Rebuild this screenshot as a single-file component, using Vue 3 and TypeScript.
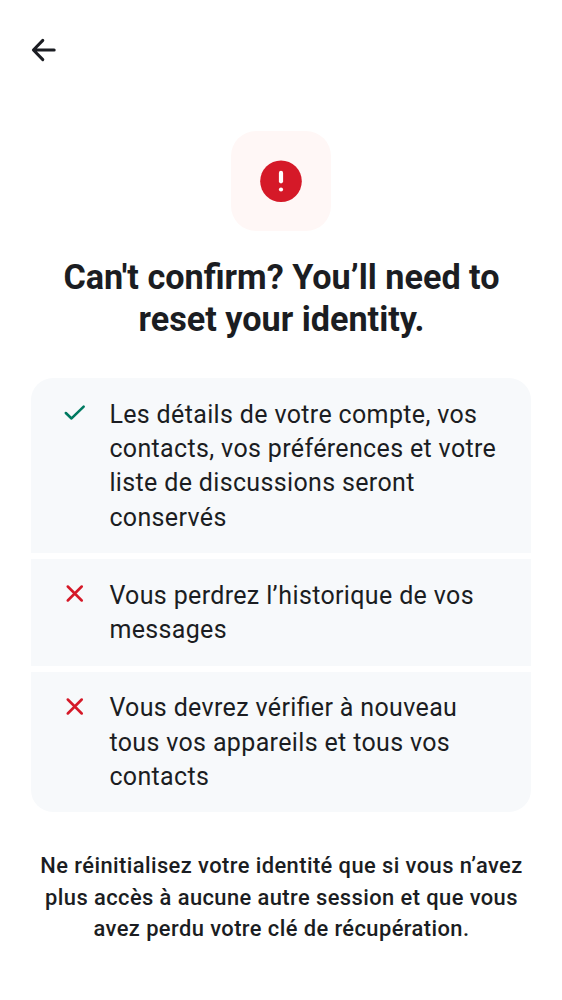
<script setup lang="ts">
interface Item {
  kind: 'check' | 'cross'
  lines: string[]
}
const items: Item[] = [
  { kind: 'check', lines: ['Les détails de votre compte, vos', 'contacts, vos préférences et votre', 'liste de discussions seront', 'conservés'] },
  { kind: 'cross', lines: ['Vous perdrez l’historique de vos', 'messages'] },
  { kind: 'cross', lines: ['Vous devrez vérifier à nouveau', 'tous vos appareils et tous vos', 'contacts'] },
]
const title: string[] = ["Can't confirm? You’ll need to", 'reset your identity.']
const footer: string[] = ['Ne réinitialisez votre identité que si vous n’avez', 'plus accès à aucune autre session et que vous', 'avez perdu votre clé de récupération.']
</script>

<template>
  <main class="screen">
    <header class="bar">
      <button class="back" aria-label="Retour">
        <svg width="25" height="24" viewBox="0 0 25 24"><path d="M23.2 12H2.8M11.8 2.4L2.4 12l9.4 9.6" fill="none" stroke="#1b1d22" stroke-width="3" stroke-linecap="round" stroke-linejoin="round" /></svg>
      </button>
    </header>
    <div class="badge">
      <svg width="42" height="42" viewBox="0 0 42 42">
        <circle cx="21" cy="21.2" r="20.8" fill="#d51928" />
        <path d="M21 12.9v8.4" stroke="#fff" stroke-width="4.2" stroke-linecap="round" />
        <circle cx="21" cy="29.5" r="2.1" fill="#fff" />
      </svg>
    </div>
    <h1><span v-for="l in title" :key="l">{{ l }}</span></h1>
    <ul class="list">
      <li v-for="(item, i) in items" :key="i">
        <svg class="mark" :class="item.kind" width="31" height="31" viewBox="0 0 24 24">
          <path v-if="item.kind === 'check'" d="M5.3 12.4L9.7 16.6L19.1 7.4" />
          <path v-else d="M6.8 6.6l10.8 10.8M17.6 6.6L6.8 17.4" />
        </svg>
        <p><span v-for="l in item.lines" :key="l">{{ l }}</span></p>
      </li>
    </ul>
    <p class="footer"><span v-for="l in footer" :key="l">{{ l }}</span></p>
  </main>
</template>

<style>
body { margin: 0; background: #fff; }
</style>
<style scoped>
.screen { box-sizing: border-box; width: 562px; height: 1000px; overflow: hidden; padding: 0 31px; background: #fff; color: #1b1d22; font-family: Roboto, sans-serif; display: flex; flex-direction: column; }
.bar { height: 100px; display: flex; align-items: center; flex: none; }
.back { border: 0; padding: 0; background: none; display: flex; }
.badge { flex: none; align-self: center; width: 100px; height: 100px; margin-top: 31px; border-radius: 25px; background: #fff7f6; display: flex; align-items: center; justify-content: center; }
span { display: block; white-space: nowrap; }
h1 { margin: 25px 0 0; padding-left: 1px; font-size: 34.2px; line-height: 42px; font-weight: 700; text-align: center; }
.list { list-style: none; margin: 38px 0 0; padding: 0; display: flex; flex-direction: column; gap: 6.25px; border-radius: 22px; overflow: hidden; }
li { display: flex; align-items: flex-start; gap: 19.4px; padding: 18.75px 28px; background: #f7f9fb; }
li p { margin: .9px 0 -.9px; font-size: 25px; line-height: 34.375px; letter-spacing: .35px; font-feature-settings: "liga" 1; }
.mark { flex: none; fill: none; stroke-width: 2; stroke-linecap: round; stroke-linejoin: round; }
.check { stroke: #007a61; }
.cross { stroke: #d51928; }
.footer { margin: 38px 0 0; padding-left: 1px; text-align: center; font-size: 21.9px; line-height: 31.25px; font-weight: 500; letter-spacing: .42px; }
.footer span { margin: 0 -20px; }
</style>
